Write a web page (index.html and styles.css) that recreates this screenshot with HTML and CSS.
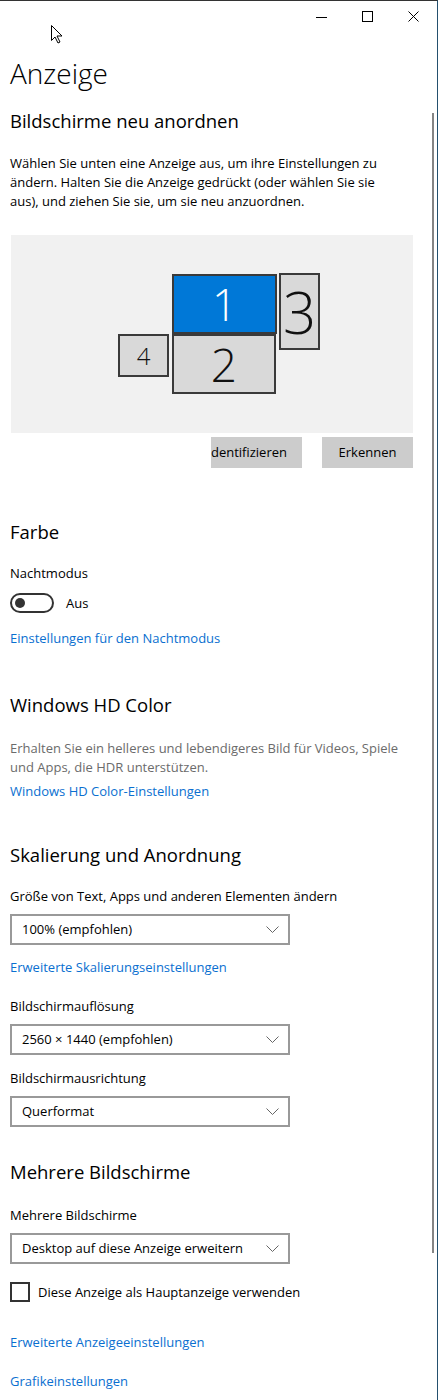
FILE: index.html
```html
<!DOCTYPE html>
<html lang="de">
<head>
  <meta charset="UTF-8" />
  <meta name="viewport" content="width=device-width, initial-scale=1.0"/>
  <title>Einstellungen – Anzeige</title>
  <link rel="stylesheet" href="styles.css">
</head>
<body>
  <div class="window">
    <div class="titlebar">
      <span class="caption-btn">
        <svg width="12" height="12" viewBox="0 0 12 12"><path d="M0 6.5h11" stroke="#000" fill="none"/></svg>
      </span>
      <span class="caption-btn">
        <svg width="12" height="12" viewBox="0 0 12 12"><rect x="0.5" y="0.5" width="10" height="10" stroke="#000" fill="none"/></svg>
      </span>
      <span class="caption-btn">
        <svg width="12" height="12" viewBox="0 0 12 12"><path d="M0.5 0.5l10 10M10.5 0.5l-10 10" stroke="#000" fill="none"/></svg>
      </span>
    </div>

    <svg class="cursor" width="14" height="20" viewBox="0 0 14 20">
      <path d="M1.5 1.5v15l3.5-3.5 3 6 2-1-3-6h5z" fill="#fff" stroke="#000" stroke-linejoin="round"/>
    </svg>

    <main class="content">
      <h1>Anzeige</h1>

      <h2 class="first">Bildschirme neu anordnen</h2>
      <p class="intro">Wählen Sie unten eine Anzeige aus, um ihre Einstellungen zu<br>ändern. Halten Sie die Anzeige gedrückt (oder wählen Sie sie<br>aus), und ziehen Sie sie, um sie neu anzuordnen.</p>

      <div class="arrangement">
        <div class="monitor m1 selected">1</div>
        <div class="monitor m2">2</div>
        <div class="monitor m3">3</div>
        <div class="monitor m4">4</div>
      </div>
      <div class="arrange-actions">
        <button type="button" class="btn">Identifizieren</button>
        <button type="button" class="btn">Erkennen</button>
      </div>

      <h2 class="farbe">Farbe</h2>
      <div class="label">Nachtmodus</div>
      <div class="toggle-row">
        <span class="toggle"><span class="knob"></span></span>
        <span>Aus</span>
      </div>
      <a class="link night" href="#">Einstellungen für den Nachtmodus</a>

      <h2 class="hdr">Windows HD Color</h2>
      <p class="muted">Erhalten Sie ein helleres und lebendigeres Bild für Videos, Spiele<br>und Apps, die HDR unterstützen.</p>
      <a class="link hdr-link" href="#">Windows HD Color-Einstellungen</a>

      <h2 class="scale">Skalierung und Anordnung</h2>
      <div class="label">Größe von Text, Apps und anderen Elementen ändern</div>
      <div class="select">
        <span>100% (empfohlen)</span>
        <svg width="13" height="8" viewBox="0 0 13 8"><path d="M0.5 0.5l6 6 6-6" stroke="#666" fill="none"/></svg>
      </div>
      <a class="link after-select" href="#">Erweiterte Skalierungseinstellungen</a>

      <div class="label res">Bildschirmauflösung</div>
      <div class="select">
        <span>2560 × 1440 (empfohlen)</span>
        <svg width="13" height="8" viewBox="0 0 13 8"><path d="M0.5 0.5l6 6 6-6" stroke="#666" fill="none"/></svg>
      </div>

      <div class="label orient">Bildschirmausrichtung</div>
      <div class="select">
        <span>Querformat</span>
        <svg width="13" height="8" viewBox="0 0 13 8"><path d="M0.5 0.5l6 6 6-6" stroke="#666" fill="none"/></svg>
      </div>

      <h2 class="multi">Mehrere Bildschirme</h2>
      <div class="label multi-label">Mehrere Bildschirme</div>
      <div class="select">
        <span>Desktop auf diese Anzeige erweitern</span>
        <svg width="13" height="8" viewBox="0 0 13 8"><path d="M0.5 0.5l6 6 6-6" stroke="#666" fill="none"/></svg>
      </div>
      <label class="check-row">
        <span class="checkbox"></span>
        Diese Anzeige als Hauptanzeige verwenden
      </label>

      <a class="link advanced" href="#">Erweiterte Anzeigeeinstellungen</a>
      <a class="link graphics" href="#">Grafikeinstellungen</a>
    </main>

    <div class="scrollbar"></div>
  </div>
</body>
</html>
```

FILE: styles.css
```css
body {
  margin: 0;
  font-family: "Segoe UI", "Open Sans", sans-serif;
  font-size: 13px;
  line-height: 19px;
  color: #000;
  background: #fff;
}
.window {
  position: relative;
  width: 437px;
  height: 1400px;
  border-top: 1px solid #333;
  border-right: 1px solid #24506e;
  overflow: hidden;
}
.titlebar {
  height: 31px;
  display: flex;
  justify-content: flex-end;
  padding-right: 1px;
}
.caption-btn {
  width: 46px;
  display: flex;
  align-items: center;
  justify-content: center;
}
.caption-btn svg {
  display: block;
  margin-left: 1px;
}
.cursor {
  position: absolute;
  left: 50px;
  top: 23px;
}
.content {
  padding: 0 24px 0 10px;
}
h1 {
  margin: 21px 0 0;
  font-size: 28px;
  line-height: 40px;
  font-weight: 300;
}
h2 {
  font-size: 18.5px;
  line-height: 28px;
  font-weight: 400;
  margin: 0;
}
h2.first { margin-top: 14px; }
h2.farbe { margin-top: 50px; }
h2.hdr { margin-top: 43px; }
h2.scale { margin-top: 40px; }
h2.multi { margin-top: 31px; }
p {
  margin: 0;
}
.intro {
  margin-top: 19px;
}
.muted {
  margin-top: 20px;
  color: #6b6b6b;
}
.label {
  margin-top: 18px;
}
.label.res { margin-top: 20px; }
.label.orient { margin-top: 14px; }
.label.multi-label { margin-top: 20px; }

/* monitor layout canvas */
.arrangement {
  position: relative;
  margin: 24px 0 0 1px;
  height: 198px;
  background: #f1f1f1;
}
.monitor {
  position: absolute;
  box-sizing: border-box;
  border: 2px solid #3a3a3a;
  background: #d9d9d9;
  display: flex;
  align-items: center;
  justify-content: center;
  font-weight: 300;
  color: #111;
}
.monitor.selected {
  background: #0078d7;
  color: #fff;
}
.m1 { left: 161px; top: 39px; width: 105px; height: 60px; font-size: 44px; }
.m2 { left: 161px; top: 99px; width: 104px; height: 60px; font-size: 46px; }
.m3 { left: 268px; top: 38px; width: 41px; height: 77px; font-size: 58px; }
.m4 { left: 107px; top: 99px; width: 51px; height: 43px; font-size: 24px; }

.arrange-actions {
  display: flex;
  justify-content: flex-end;
  gap: 20px;
  margin-top: 4px;
}
.btn {
  width: 91px;
  height: 31px;
  border: none;
  background: #cccccc;
  font: inherit;
  color: #000;
  padding: 0 15px;
  display: flex;
  align-items: center;
  justify-content: flex-end;
  overflow: hidden;
  white-space: nowrap;
}
.btn:last-child {
  justify-content: center;
}

.toggle-row {
  display: flex;
  align-items: center;
  gap: 12px;
  margin-top: 10px;
}
.toggle {
  box-sizing: border-box;
  width: 44px;
  height: 20px;
  border: 2px solid #333;
  border-radius: 10px;
  display: flex;
  align-items: center;
  padding-left: 3px;
}
.knob {
  width: 10px;
  height: 10px;
  border-radius: 50%;
  background: #333;
}

.link {
  display: block;
  color: #0a6fd0;
  text-decoration: none;
}
.link.night { margin-top: 16px; }
.link.hdr-link { margin-top: 5px; }
.link.after-select { margin-top: 13px; }
.link.advanced { margin-top: 31px; }
.link.graphics { margin-top: 20px; }

.select {
  box-sizing: border-box;
  width: 280px;
  height: 31px;
  margin-top: 8px;
  border: 2px solid #999;
  padding: 0 9px 0 10px;
  display: flex;
  align-items: center;
  justify-content: space-between;
}

.check-row {
  display: flex;
  align-items: center;
  gap: 8px;
  margin-top: 18px;
}
.checkbox {
  box-sizing: border-box;
  width: 20px;
  height: 20px;
  border: 2px solid #333;
}

.scrollbar {
  position: absolute;
  right: 3px;
  top: 112px;
  width: 2px;
  height: 1140px;
  background: #858585;
}
```
